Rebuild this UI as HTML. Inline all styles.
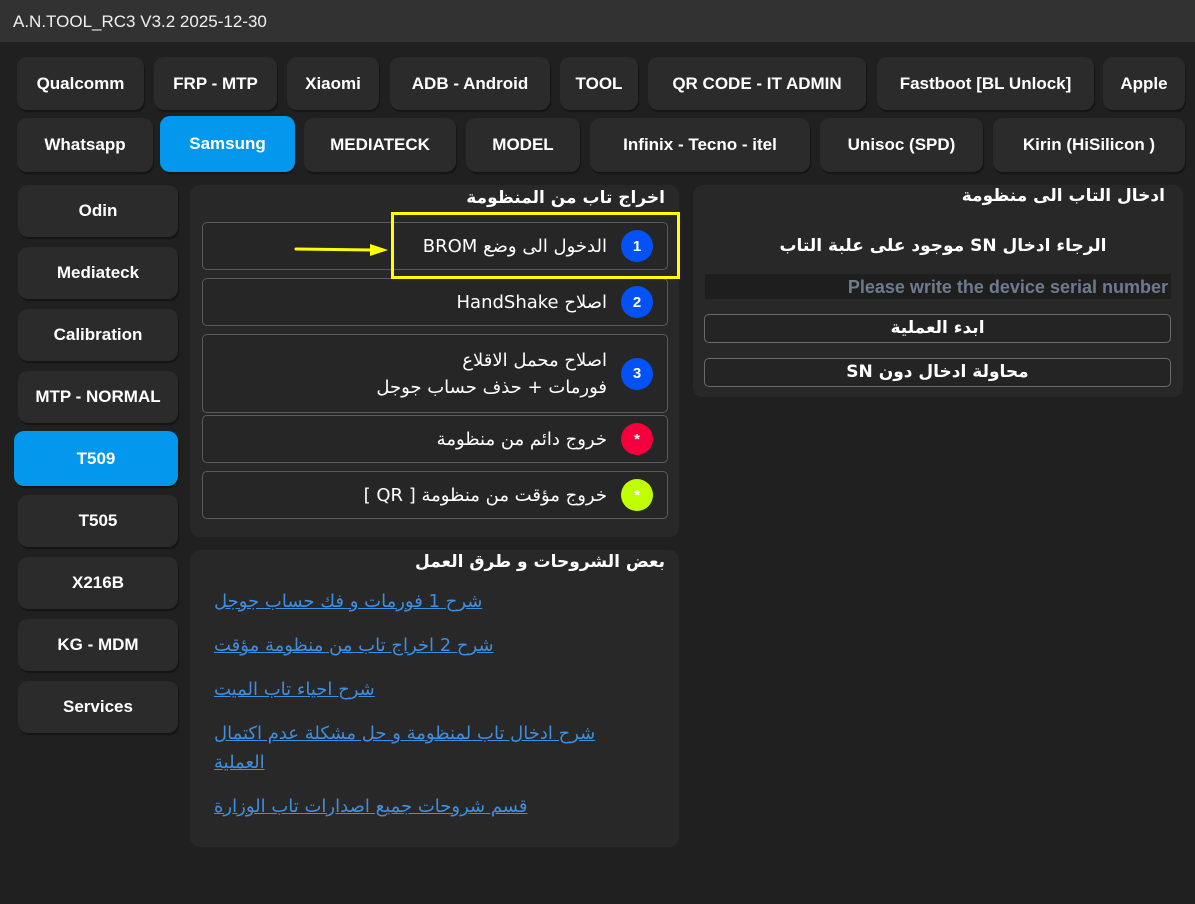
<!DOCTYPE html>
<html><head><meta charset="utf-8"><style>
*{margin:0;padding:0;box-sizing:border-box}
body{width:1195px;height:904px;background:#202020;font-family:"Liberation Sans","DejaVu Sans",sans-serif;color:#fff;position:relative;overflow:hidden}
.title{position:absolute;left:0;top:0;width:1195px;height:42px;background:#323232;font-size:17px;padding:12px 0 0 13px;color:#f0f0f0}
.b{position:absolute;background:#2b2b2b;border-radius:10px;display:flex;align-items:center;justify-content:center;font-weight:bold;font-size:17px;box-shadow:1px 2px 1px #151515;white-space:nowrap}
.on{background:#0398ee}
.p{position:absolute;background:#282828;border-radius:10px}
.pt{position:absolute;font-family:"DejaVu Sans",sans-serif;font-weight:bold;font-size:16px;direction:rtl;white-space:nowrap}
.it{position:absolute;left:202px;width:466px;border:1px solid #5a5a5a;border-radius:5px;background:#262626;font-family:"DejaVu Sans",sans-serif;font-size:18px;direction:rtl;display:flex;align-items:center;padding-right:60px;line-height:27px;white-space:nowrap}
.c{position:absolute;right:14px;top:50%;margin-top:-16px;width:32px;height:32px;border-radius:50%;display:flex;align-items:center;justify-content:center;font-weight:bold;font-size:15px;font-family:"Liberation Sans",sans-serif}
.lk{position:absolute;left:214px;color:#3f8fe0;text-decoration:underline;font-family:"DejaVu Sans",sans-serif;font-size:18px;direction:rtl;text-align:left;width:400px;line-height:29px}
.rb{position:absolute;left:704px;width:467px;height:29px;border:1px solid #6a6a6a;border-radius:5px;background:#242424;font-family:"DejaVu Sans",sans-serif;font-weight:bold;font-size:17px;direction:rtl;text-align:center;line-height:27px}
</style></head><body>
<div class="title">A.N.TOOL_RC3 V3.2 2025-12-30</div>

<div class="b" style="left:17px;top:57px;width:127px;height:53px">Qualcomm</div>
<div class="b" style="left:154px;top:57px;width:123px;height:53px">FRP - MTP</div>
<div class="b" style="left:287px;top:57px;width:92px;height:53px">Xiaomi</div>
<div class="b" style="left:390px;top:57px;width:160px;height:53px">ADB - Android</div>
<div class="b" style="left:560px;top:57px;width:78px;height:53px">TOOL</div>
<div class="b" style="left:648px;top:57px;width:218px;height:53px">QR CODE - IT ADMIN</div>
<div class="b" style="left:877px;top:57px;width:217px;height:53px">Fastboot [BL Unlock]</div>
<div class="b" style="left:1103px;top:57px;width:82px;height:53px">Apple</div>

<div class="b" style="left:17px;top:118px;width:136px;height:54px">Whatsapp</div>
<div class="b on" style="left:160px;top:116px;width:135px;height:56px">Samsung</div>
<div class="b" style="left:304px;top:118px;width:152px;height:54px">MEDIATECK</div>
<div class="b" style="left:466px;top:118px;width:114px;height:54px">MODEL</div>
<div class="b" style="left:590px;top:118px;width:220px;height:54px">Infinix - Tecno - itel</div>
<div class="b" style="left:820px;top:118px;width:163px;height:54px">Unisoc (SPD)</div>
<div class="b" style="left:993px;top:118px;width:192px;height:54px">Kirin (HiSilicon )</div>

<div class="b" style="left:18px;top:185px;width:160px;height:52px">Odin</div>
<div class="b" style="left:18px;top:247px;width:160px;height:52px">Mediateck</div>
<div class="b" style="left:18px;top:309px;width:160px;height:52px">Calibration</div>
<div class="b" style="left:18px;top:371px;width:160px;height:52px">MTP - NORMAL</div>
<div class="b on" style="left:14px;top:431px;width:164px;height:55px">T509</div>
<div class="b" style="left:18px;top:495px;width:160px;height:52px">T505</div>
<div class="b" style="left:18px;top:557px;width:160px;height:52px">X216B</div>
<div class="b" style="left:18px;top:619px;width:160px;height:52px">KG - MDM</div>
<div class="b" style="left:18px;top:681px;width:160px;height:52px">Services</div>

<div class="p" style="left:190px;top:185px;width:489px;height:352px"></div>
<div class="pt" style="right:530px;top:188px;font-size:17px">اخراج تاب من المنظومة</div>
<div class="it" style="top:222px;height:48px">الدخول الى وضع BROM<div class="c" style="background:#0452f5">1</div></div>
<div class="it" style="top:278px;height:48px">اصلاح HandShake<div class="c" style="background:#0452f5">2</div></div>
<div class="it" style="top:334px;height:79px">اصلاح محمل الاقلاع<br>فورمات + حذف حساب جوجل<div class="c" style="background:#0452f5">3</div></div>
<div class="it" style="top:415px;height:48px">خروج دائم من منظومة<div class="c" style="background:#f5003c">*</div></div>
<div class="it" style="top:471px;height:48px">خروج مؤقت من منظومة [ QR ]<div class="c" style="background:#bfff00">*</div></div>
<div style="position:absolute;left:391px;top:212px;width:289px;height:67px;border:3px solid #ffff00"></div>
<svg style="position:absolute;left:290px;top:240px" width="100" height="20"><line x1="6" y1="9" x2="82" y2="10" stroke="#ffff00" stroke-width="3" stroke-linecap="round"/><polygon points="80,4 98,10 80,16" fill="#ffff00"/></svg>

<div class="p" style="left:190px;top:550px;width:489px;height:297px"></div>
<div class="pt" style="right:530px;top:552px;font-size:17px">بعض الشروحات و طرق العمل</div>
<div class="lk" style="top:587px">شرح 1 فورمات و فك حساب جوجل</div>
<div class="lk" style="top:631px">شرح 2 اخراج تاب من منظومة مؤقت</div>
<div class="lk" style="top:675px">شرح احياء تاب الميت</div>
<div class="lk" style="top:719px">شرح ادخال تاب لمنظومة و حل مشكلة عدم اكتمال العملية</div>
<div class="lk" style="top:792px">قسم شروحات جميع اصدارات تاب الوزارة</div>

<div class="p" style="left:693px;top:185px;width:490px;height:212px"></div>
<div class="pt" style="right:30px;top:186px;font-size:17px">ادخال التاب الى منظومة</div>
<div class="pt" style="left:693px;width:490px;text-align:center;top:236px;padding-left:10px;font-size:17px">الرجاء ادخال SN موجود على علبة التاب</div>
<div style="position:absolute;left:705px;top:274px;width:466px;height:25px;background:#1e1e1e;color:#6d7c8c;font-weight:bold;font-size:18px;text-align:right;padding-right:3px;line-height:26px">Please write the device serial number</div>
<div class="rb" style="top:314px">ابدء العملية</div>
<div class="rb" style="top:358px">محاولة ادخال دون SN</div>
</body></html>
